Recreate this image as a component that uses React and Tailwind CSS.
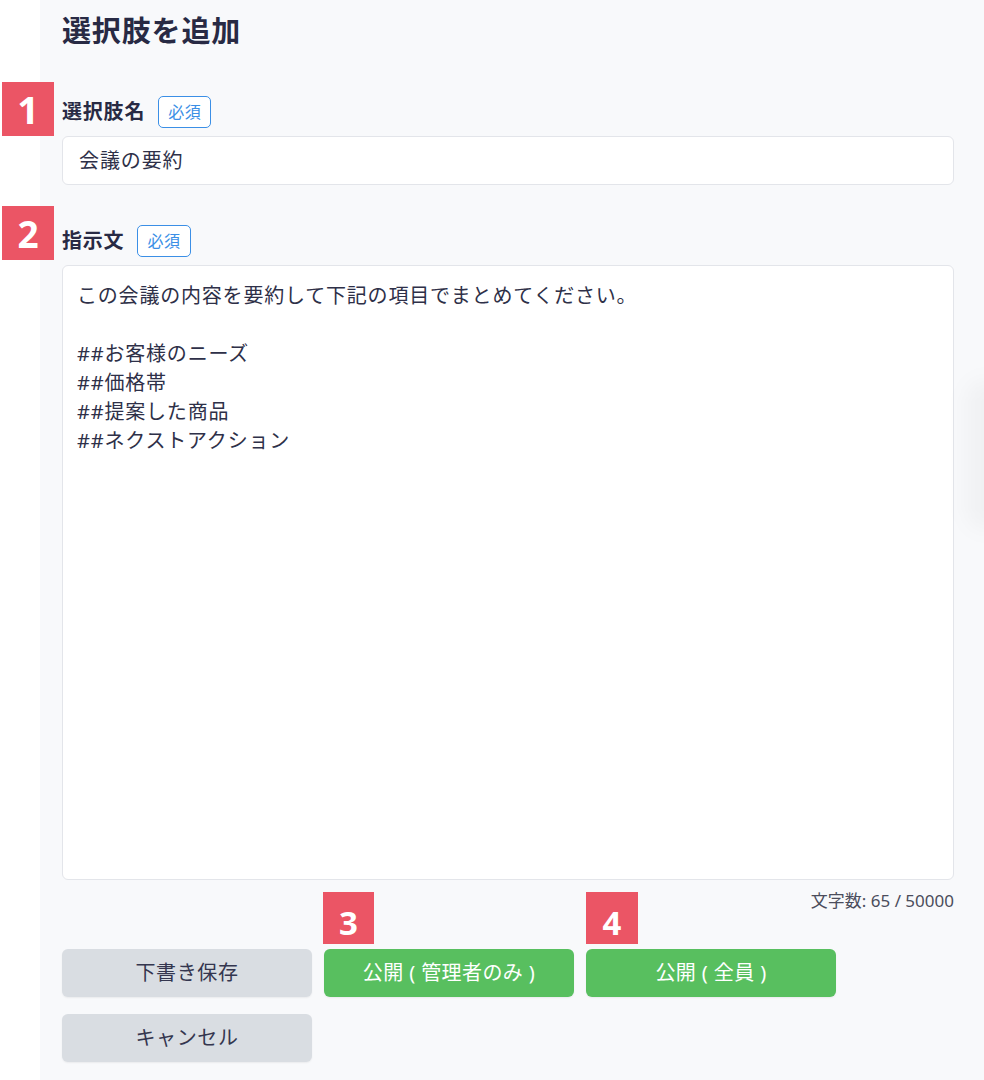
import React from "react";

const text = `この会議の内容を要約して下記の項目でまとめてください。

##お客様のニーズ
##価格帯
##提案した商品
##ネクストアクション`;

function Num({ n, className }) {
  return (
    <div
      className={`absolute flex items-center justify-center bg-[#eb5565] text-white font-bold leading-none font-['Noto_Sans','Noto_Sans_CJK_JP',sans-serif] ${className}`}
    >
      {n}
    </div>
  );
}

function Required() {
  return (
    <span className="inline-flex h-[32px] items-center rounded-[5px] border border-[#3b8fe6] bg-white px-[9px] text-[16px] font-normal text-[#3b8fe6] tracking-[0.04em]">
      必須
    </span>
  );
}

export default function App() {
  return (
    <div className="relative flex h-[1080px] w-[984px] overflow-hidden bg-white font-['Noto_Sans','Noto_Sans_CJK_JP',sans-serif]">
      <div className="w-[40px] shrink-0 bg-white" />
      <div className="flex flex-1 flex-col bg-[#f8f9fb] pl-[22px] pr-[30px] pt-[10px]">
        <h1 className="text-[29px] font-bold leading-[42px] tracking-[0.03em] text-[#282a44]">
          選択肢を追加
        </h1>

        <div className="mt-[44px] flex items-center gap-[13px]">
          <span className="text-[20px] font-bold tracking-[0.04em] text-[#282a44]">選択肢名</span>
          <Required />
        </div>
        <div className="mt-[8px] flex h-[49px] items-center rounded-[6px] border border-[#e3e5ea] bg-white pl-[16px] text-[20px] tracking-[0.045em] text-[#2e3048]">
          会議の要約
        </div>

        <div className="mt-[40px] flex items-center gap-[13px]">
          <span className="text-[20px] font-bold tracking-[0.04em] text-[#282a44]">指示文</span>
          <Required />
        </div>
        <textarea
          readOnly
          value={text}
          className="mt-[8px] h-[615px] w-full resize-none rounded-[6px] border border-[#e3e5ea] bg-white px-[14px] pt-[15px] text-[20px] leading-[29px] tracking-[0.04em] text-[#2e3048] outline-none"
        />
        <div className="mt-[10px] text-right text-[17px] leading-[22px] text-[#4b4d5c]">
          文字数: 65 / 50000
        </div>

        <div className="mt-[37px] flex flex-col gap-[17px]">
          <div className="flex gap-[12px]">
            <button className="h-[48px] w-[250px] rounded-[6px] bg-[#d9dde2] text-[20px] font-normal tracking-[0.03em] text-[#34364f] shadow-[0_1px_2px_rgba(0,0,0,0.06)]">
              下書き保存
            </button>
            <button className="h-[48px] w-[250px] rounded-[6px] bg-[#58bf5f] text-[20px] font-normal tracking-[0.02em] text-white shadow-[0_1px_2px_rgba(0,0,0,0.06)]">
              公開 ( 管理者のみ )
            </button>
            <button className="h-[48px] w-[250px] rounded-[6px] bg-[#58bf5f] text-[20px] font-normal tracking-[0.02em] text-white shadow-[0_1px_2px_rgba(0,0,0,0.06)]">
              公開 ( 全員 )
            </button>
          </div>
          <div className="flex">
            <button className="h-[48px] w-[250px] rounded-[6px] bg-[#d9dde2] text-[20px] font-normal tracking-[0.03em] text-[#34364f] shadow-[0_1px_2px_rgba(0,0,0,0.06)]">
              キャンセル
            </button>
          </div>
        </div>
      </div>

      <div className="pointer-events-none absolute right-[-22px] top-[380px] h-[150px] w-[40px] rounded-full bg-[rgba(0,0,0,0.03)] blur-[10px]" />

      <Num n="1" className="left-[2px] top-[82px] h-[54px] w-[52px] text-[38px]" />
      <Num n="2" className="left-[2px] top-[206px] h-[54px] w-[52px] text-[37px]" />
      <Num n="3" className="left-[323px] top-[892px] h-[52px] w-[51px] pt-[8px] text-[33px]" />
      <Num n="4" className="left-[586px] top-[892px] h-[52px] w-[52px] pt-[8px] text-[33px]" />
    </div>
  );
}
